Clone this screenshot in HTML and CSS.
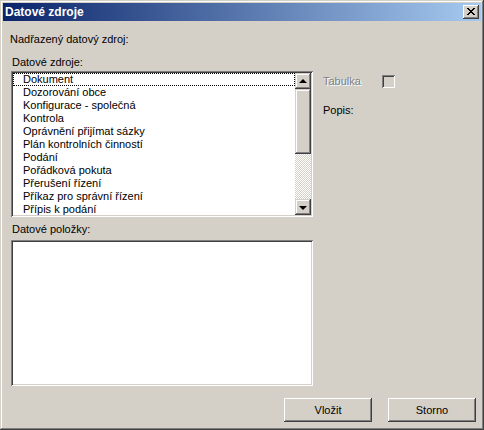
FILE: index.html
```html
<!DOCTYPE html>
<html lang="cs">
<head>
<meta charset="utf-8">
<title>Datové zdroje</title>
<link rel="stylesheet" href="styles.css">
</head>
<body>
<div class="window">
  <div class="titlebar">
    <span class="title">Datové zdroje</span>
    <span class="close">
      <svg width="8" height="7" viewBox="0 0 8 7" shape-rendering="crispEdges">
        <path d="M0 0h2v1h-2zM6 0h2v1h-2zM1 1h2v1h-2zM5 1h2v1h-2zM2 2h4v1h-4zM3 3h2v1h-2zM2 4h4v1h-4zM1 5h2v1h-2zM5 5h2v1h-2zM0 6h2v1h-2zM6 6h2v1h-2z" fill="#000"/>
      </svg>
    </span>
  </div>
  <div class="content">
    <div class="label first">Nadřazený datový zdroj:</div>
    <div class="main">
      <div class="leftcol">
        <div class="label l2">Datové zdroje:</div>
        <div class="listbox">
          <ul class="items">
            <li class="focus">Dokument</li>
            <li>Dozorování obce</li>
            <li>Konfigurace - společná</li>
            <li>Kontrola</li>
            <li>Oprávnění přijímat sázky</li>
            <li>Plán kontrolních činností</li>
            <li>Podání</li>
            <li>Pořádková pokuta</li>
            <li>Přerušení řízení</li>
            <li>Příkaz pro správní řízení</li>
            <li>Přípis k podání</li>
          </ul>
          <div class="scrollbar">
            <div class="sbtn"><span class="arrow up"></span></div>
            <div class="thumb"></div>
            <div class="track"></div>
            <div class="sbtn"><span class="arrow down"></span></div>
          </div>
        </div>
        <div class="label l3">Datové položky:</div>
        <div class="box2"></div>
      </div>
      <div class="rightcol">
        <div class="checkrow">
          <span class="disabled-label">Tabulka</span>
          <span class="checkbox"></span>
        </div>
        <div class="label popis">Popis:</div>
      </div>
    </div>
    <div class="buttons">
      <button class="btn">Vložit</button>
      <button class="btn">Storno</button>
    </div>
  </div>
</div>
</body>
</html>
```
FILE: styles.css
```css
* { box-sizing: border-box; }
html, body { margin: 0; padding: 0; }
body {
  background: #d4d0c8;
  font-family: "Liberation Sans", Arial, sans-serif;
  font-size: 11px;
  color: #000;
}
.window {
  width: 484px;
  height: 430px;
  padding: 3px;
  background: #d4d0c8;
  box-shadow: inset -1px -1px #404040, inset 1px 1px #d4d0c8, inset -2px -2px #808080, inset 2px 2px #fff;
  display: flex;
  flex-direction: column;
}
.titlebar {
  height: 18px;
  background: linear-gradient(to right, #0a246a, #a6caf0);
  display: flex;
  align-items: center;
  justify-content: space-between;
  padding: 0 2px 0 2px;
}
.title {
  color: #fff;
  font-weight: bold;
  font-size: 12px;
  line-height: 13px;
}
.close {
  width: 16px;
  height: 14px;
  background: #d4d0c8;
  box-shadow: inset -1px -1px #404040, inset 1px 1px #fff, inset -2px -2px #808080;
  display: flex;
  align-items: center;
  justify-content: center;
  padding: 0 1px 1px 0;
}
.close svg { display: block; }
.content {
  flex: 1;
  display: flex;
  flex-direction: column;
  padding: 0 5px 0 8px;
}
.label { line-height: 13px; height: 13px; white-space: nowrap; }
.first { margin-top: 12px; margin-left: -1px; }
.main { display: flex; gap: 10px; }
.leftcol { width: 302px; display: flex; flex-direction: column; }
.l2 { margin-top: 10px; margin-left: 1px; }
.listbox {
  margin-top: 2px;
  height: 146px;
  background: #fff;
  padding: 2px;
  box-shadow: inset 1px 1px #808080, inset -1px -1px #fff, inset 2px 2px #404040, inset -2px -2px #d4d0c8;
  display: flex;
  overflow: hidden;
}
.items {
  list-style: none;
  margin: 0;
  padding: 0;
  flex: 1;
  overflow: hidden;
}
.items li {
  height: 13px;
  line-height: 13px;
  padding-left: 10px;
  white-space: nowrap;
}
.items li.focus { outline: 1px dotted #000; outline-offset: -1px; }
.scrollbar {
  width: 16px;
  display: flex;
  flex-direction: column;
}
.sbtn, .thumb {
  background: #d4d0c8;
  box-shadow: inset -1px -1px #404040, inset 1px 1px #d4d0c8, inset -2px -2px #808080, inset 2px 2px #fff;
}
.sbtn {
  height: 16px;
  display: flex;
  align-items: center;
  justify-content: center;
}
.thumb { height: 65px; }
.track {
  flex: 1;
  background-color: #d4d0c8;
  background-image: conic-gradient(#fff 25%, #d4d0c8 0 50%, #fff 0 75%, #d4d0c8 0);
  background-size: 2px 2px;
}
.arrow { width: 0; height: 0; border-left: 4px solid transparent; border-right: 4px solid transparent; }
.arrow.up { border-bottom: 4px solid #000; margin-top: -1px; }
.arrow.down { border-top: 4px solid #000; margin-top: 1px; }
.l3 { margin-top: 6px; margin-left: 1px; }
.box2 {
  margin-top: 4px;
  height: 146px;
  background: #fff;
  box-shadow: inset 1px 1px #808080, inset -1px -1px #fff, inset 2px 2px #404040, inset -2px -2px #d4d0c8;
}
.rightcol { margin-top: 29px; display: flex; flex-direction: column; }
.checkrow { display: flex; align-items: center; height: 13px; }
.disabled-label {
  width: 59px;
  color: #808080;
  text-shadow: 1px 1px #fff;
  line-height: 13px;
}
.checkbox {
  width: 13px;
  height: 13px;
  background: #d4d0c8;
  box-shadow: inset 1px 1px #808080, inset -1px -1px #fff, inset 2px 2px #404040, inset -2px -2px #d4d0c8;
}
.popis { margin-top: 16px; }
.buttons {
  margin-top: 12px;
  display: flex;
  justify-content: flex-end;
  gap: 16px;
}
.btn {
  width: 88px;
  height: 24px;
  border: none;
  padding: 0;
  background: #d4d0c8;
  font-family: "Liberation Sans", Arial, sans-serif;
  font-size: 11px;
  color: #000;
  box-shadow: inset -1px -1px #404040, inset 1px 1px #fff, inset -2px -2px #808080;
}
```
